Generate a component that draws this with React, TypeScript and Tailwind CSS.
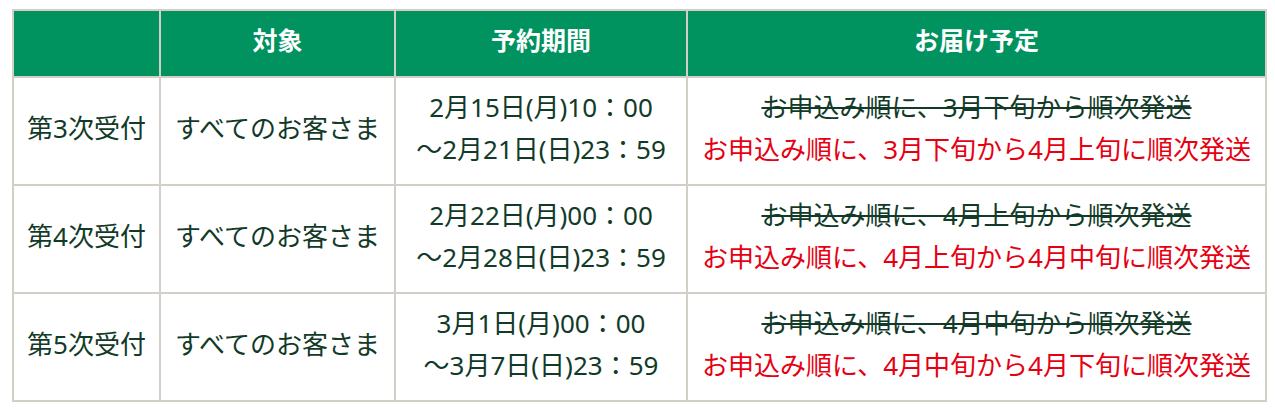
import React from "react";

const rows = [
  {
    n: "第3次受付",
    t: "すべてのお客さま",
    p1: "2月15日(月)10：00",
    p2: "～2月21日(日)23：59",
    old: "お申込み順に、3月下旬から順次発送",
    nw: "お申込み順に、3月下旬から4月上旬に順次発送",
  },
  {
    n: "第4次受付",
    t: "すべてのお客さま",
    p1: "2月22日(月)00：00",
    p2: "～2月28日(日)23：59",
    old: "お申込み順に、4月上旬から順次発送",
    nw: "お申込み順に、4月上旬から4月中旬に順次発送",
  },
  {
    n: "第5次受付",
    t: "すべてのお客さま",
    p1: "3月1日(月)00：00",
    p2: "～3月7日(日)23：59",
    old: "お申込み順に、4月中旬から順次発送",
    nw: "お申込み順に、4月中旬から4月下旬に順次発送",
  },
];

export default function App() {
  return (
    <div
      className="bg-white w-[1275px] h-[411px] pt-[9px] pl-[12px]"
      style={{ fontFamily: '"Noto Sans", "Noto Sans CJK JP", sans-serif' }}
    >
      <table className="border-collapse border-2 border-[#d3cfc7] text-[#123a28] w-[1253px] table-fixed">
        <colgroup>
          <col className="w-[147px]" />
          <col className="w-[235px]" />
          <col className="w-[292px]" />
          <col className="w-[579px]" />
        </colgroup>
        <thead>
          <tr className="h-[67px] bg-[#00925f] text-white text-[25px] font-bold">
            <th className="border-2 border-[#d3cfc7] pb-[5px]"></th>
            <th className="border-2 border-[#d3cfc7] pb-[5px]">対象</th>
            <th className="border-2 border-[#d3cfc7] pb-[5px]">予約期間</th>
            <th className="border-2 border-[#d3cfc7] pb-[5px]">お届け予定</th>
          </tr>
        </thead>
        <tbody className="text-[26px] leading-[42px]">
          {rows.map((r) => (
            <tr key={r.n} className="h-[108px]">
              <td className="border-2 border-[#d3cfc7] text-center whitespace-nowrap pb-[7px]">{r.n}</td>
              <td className="border-2 border-[#d3cfc7] text-center whitespace-nowrap pb-[7px]">{r.t}</td>
              <td className="border-2 border-[#d3cfc7] text-center whitespace-nowrap pb-[7px]">
                <div>{r.p1}</div>
                <div>{r.p2}</div>
              </td>
              <td className="border-2 border-[#d3cfc7] text-center whitespace-nowrap pb-[7px]">
                <div className="line-through decoration-[#123a28] decoration-2">{r.old}</div>
                <div className="text-[#e60012]">{r.nw}</div>
              </td>
            </tr>
          ))}
        </tbody>
      </table>
    </div>
  );
}
